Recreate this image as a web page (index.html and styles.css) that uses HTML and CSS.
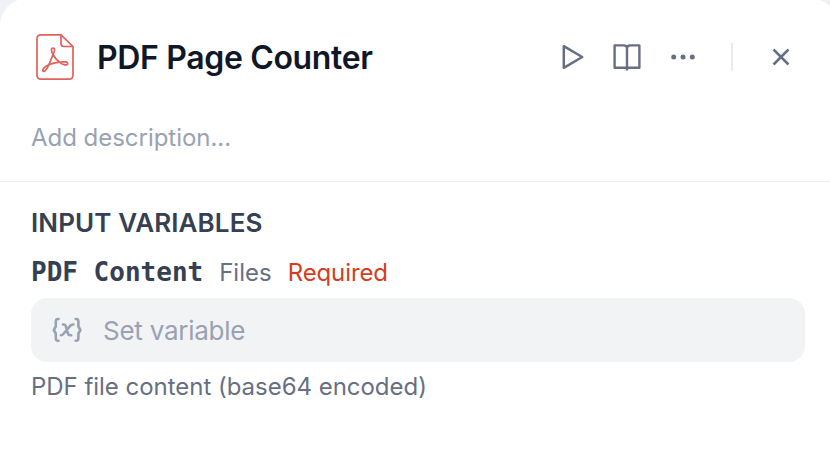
FILE: index.html
```html
<!DOCTYPE html>
<html lang="en">
<head>
<meta charset="utf-8">
<title>PDF Page Counter</title>
<link rel="stylesheet" href="styles.css">
</head>
<body>
<main class="panel">
  <header class="header">
    <svg class="file-icon" width="40" height="48" viewBox="0 0 40 48" fill="none" stroke="#e0625a" stroke-width="1.700" stroke-linejoin="round">
      <path d="M26 1.800H6Q2 1.800 2 5.800V42Q2 46.200 6 46.200H34Q38 46.200 38 42V13.500Z"/>
      <path d="M26 1.800V10.500Q26 13.500 29 13.500H38"/>
      <path d="M18 15C15.900 15 16 18.200 18 21.500C19.500 24.500 21.500 27 24.500 29.200C28 32.200 32.700 32.800 32.700 30.700C32.700 28.500 28.500 28.600 24.500 29.200C21 29.600 17 30.500 13.800 31.700C9.800 33.200 7 36.500 8 38.100C9.300 39.700 12.400 35.800 13.800 31.700C15 28.800 16.800 25 18 21.500C20 18 20.100 15 18 15Z"/>
    </svg>
    <h1 class="title">PDF Page Counter</h1>
    <div class="actions">
      <svg class="run" width="24" height="28" viewBox="0 0 24 28" fill="none" stroke="#676f83" stroke-width="2.500" stroke-linejoin="round"><path d="M2.800 3.200V24.800L21.200 14Z"/></svg>
      <svg class="docs" width="28" height="28" viewBox="0 0 28 28" fill="none" stroke="#676f83" stroke-width="2.400" stroke-linejoin="round"><path d="M14 27.600V5.500Q14 2.400 10.800 2.400H1.600V24.700H26.400V2.400H17.200Q14 2.400 14 5.500"/></svg>
      <svg class="more" width="26" height="6" viewBox="0 0 26 6" fill="#676f83"><circle cx="3.700" cy="3" r="2.500"/><circle cx="13" cy="3" r="2.500"/><circle cx="22.300" cy="3" r="2.500"/></svg>
      <span class="separator"></span>
      <svg class="close" width="18" height="18" viewBox="0 0 18 18" fill="none" stroke="#676f83" stroke-width="2.500"><path d="M1.500 1.500L16.500 16.500M16.500 1.500L1.500 16.500"/></svg>
    </div>
  </header>
  <p class="description">Add description...</p>
  <section class="inputs">
    <h2 class="section-title">INPUT VARIABLES</h2>
    <div class="label"><span class="name">PDF Content</span><span class="type">Files</span><span class="required">Required</span></div>
    <div class="field">
      <svg class="var-icon" width="30" height="26" viewBox="0 0 30 26" fill="none" stroke="#98a2b2" stroke-width="2.600" stroke-linecap="round" stroke-linejoin="round">
        <path d="M6.500 2H6Q3.800 2 3.800 4.500V9.500L1.800 13L3.800 16.500V21Q3.800 23.800 6 23.800H6.500"/>
        <path d="M23.700 2H24.200Q26.400 2 26.400 4.500V9.500L28.400 13L26.400 16.500V21Q26.400 23.800 24.200 23.800H23.700"/>
        <path d="M11 7.500H12Q13.300 7.500 13.800 9.200L16 16.500Q16.500 18.300 18 18.300H19.200M21.400 7.500H20.700Q19.400 7.500 18.400 8.700L11.300 17Q10.200 18.300 9 18.300"/>
      </svg>
      <span class="placeholder">Set variable</span>
    </div>
    <p class="hint">PDF file content (base64 encoded)</p>
  </section>
</main>
</body>
</html>
```
FILE: styles.css
```css
* { box-sizing: border-box; }
body { margin: 0; overflow: hidden; background: #f0f1f5; font-family: Inter, sans-serif; }
h1, h2, p { margin: 0; font-weight: 400; }
svg { display: block; flex: none; }
.panel { width: 838px; height: 456px; margin-top: -2px; background: #fff; border-radius: 28px 28px 0 0; overflow: hidden; white-space: nowrap; }
.header { display: flex; align-items: center; height: 116px; padding: 2px 48px 0 35px; }
.title { margin-left: 22px; padding-top: 2px; font-size: 32px; line-height: 40px; font-weight: 600; letter-spacing: -0.35px; color: #101828; }
.actions { display: flex; align-items: center; margin-left: auto; }
.docs { margin-left: 28px; }
.more { margin-left: 29px; }
.separator { width: 2px; height: 28px; margin-left: 35px; background: #e9eaec; }
.close { margin-left: 39px; }
.description { height: 68px; padding: 8px 31px 0; border-bottom: 1px solid #eeeff1; font-size: 24px; line-height: 32px; color: #98a2b2; letter-spacing: -0.03px; }
.inputs { padding: 25px 33px 0 31px; }
.section-title { font-size: 26px; line-height: 32px; font-weight: 600; letter-spacing: 0.1px; color: #354052; }
.label { display: flex; align-items: baseline; height: 32px; margin-top: 17px; line-height: 32px; font-size: 24px; }
.name { font-family: "DejaVu Sans Mono", monospace; font-weight: 700; font-size: 26px; color: #354052; }
.type { margin-left: 16px; color: #676f83; }
.required { margin-left: 16px; letter-spacing: -0.1px; color: #d63d20; }
.field { display: flex; align-items: center; height: 64px; margin-top: 10px; padding-left: 21px; border-radius: 16px; background: #f1f3f5; }
.placeholder { margin-left: 21px; padding-top: 1px; font-size: 26px; letter-spacing: -0.25px; color: #98a2b2; }
.hint { margin-top: 9px; font-size: 24px; line-height: 32px; letter-spacing: -0.03px; color: #676f83; }
```
